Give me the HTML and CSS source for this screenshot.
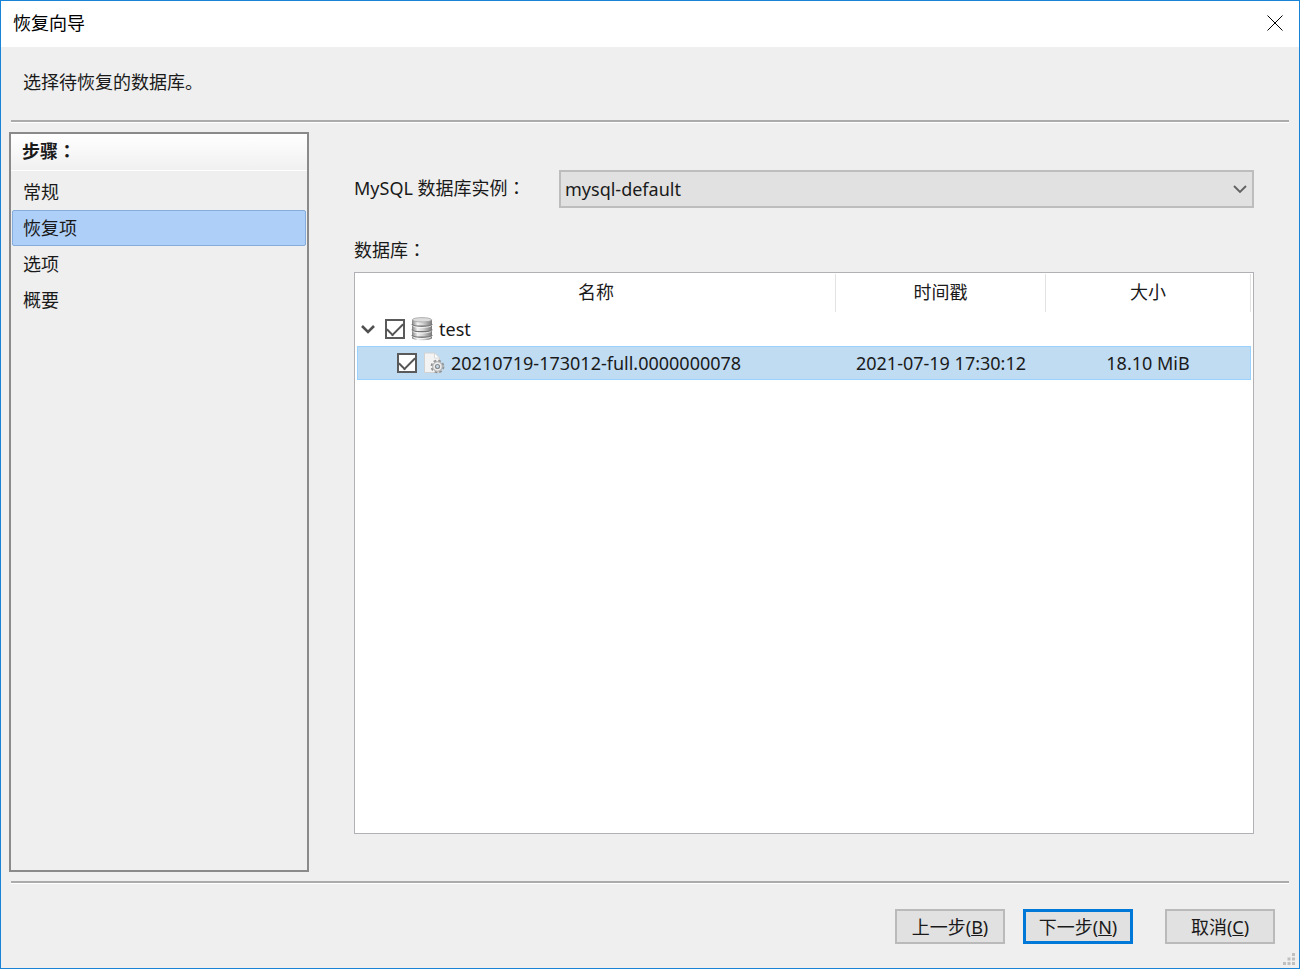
FILE: index.html
```
<!DOCTYPE html>
<html lang="zh-CN">
<head>
    <meta charset="UTF-8">
    <title>恢复向导</title>
    <link rel="stylesheet" href="styles.css">
</head>
<body>
    <div class="window">
        <div class="title-bar">
            <span>恢复向导</span>
            <button type="button" class="close" aria-label="关闭">
                <svg width="16" height="16" viewBox="0 0 16 16"><path d="M.5 .5l15 15M15.5 .5l-15 15" stroke="#000" stroke-width="1"/></svg>
            </button>
        </div>
        <div class="intro">选择待恢复的数据库。</div>
        <hr>
        <div class="main">
            <nav class="steps">
                <h2>步骤<span class="colon" lang="zh-TW">：</span></h2>
                <ul>
                    <li><a href="#">常规</a></li>
                    <li><a href="#" class="active">恢复项</a></li>
                    <li><a href="#">选项</a></li>
                    <li><a href="#">概要</a></li>
                </ul>
            </nav>
            <div class="content">
                <div class="instance-row">
                    <label for="instance">MySQL 数据库实例<span class="colon" lang="zh-TW">：</span></label>
                    <div class="select-box">
                        <select id="instance">
                            <option>mysql-default</option>
                        </select>
                        <svg class="arrow" width="14" height="9" viewBox="0 0 14 9"><path d="M1 1l6 6 6-6" fill="none" stroke="#606060" stroke-width="1.8"/></svg>
                    </div>
                </div>
                <div class="list-label">数据库<span class="colon" lang="zh-TW">：</span></div>
                <div class="list">
                    <table>
                        <colgroup>
                            <col>
                            <col class="col-time">
                            <col class="col-size">
                        </colgroup>
                        <thead>
                            <tr><th>名称</th><th>时间戳</th><th>大小</th></tr>
                        </thead>
                        <tbody>
                            <tr>
                                <td>
                                    <div class="item">
                                        <button type="button" class="toggle" aria-label="折叠">
                                            <svg width="14" height="9" viewBox="0 0 14 9"><path d="M1 1l6 6 6-6" fill="none" stroke="#505050" stroke-width="2.6"/></svg>
                                        </button>
                                        <input type="checkbox" id="db-test" checked>
                                        <svg class="icon" width="22" height="24" viewBox="0 0 22 24">
                                            <defs>
                                                <linearGradient id="metal" x1="0" x2="1" y1="0" y2="0">
                                                    <stop offset="0" stop-color="#828282"/>
                                                    <stop offset=".28" stop-color="#f2f2f2"/>
                                                    <stop offset=".55" stop-color="#d2d2d2"/>
                                                    <stop offset="1" stop-color="#777"/>
                                                </linearGradient>
                                            </defs>
                                            <path d="M1 3v18c0 3 20 3 20 0V3z" fill="url(#metal)"/>
                                            <path d="M1 7c0 3 20 3 20 0M1 12.5c0 3 20 3 20 0M1 18c0 3 20 3 20 0" fill="none" stroke="#757575" stroke-width="1.3"/>
                                            <path d="M1.5 8.5c1 2.600 18 2.600 19 0M1.5 14c1 2.600 18 2.600 19 0M1.5 19.5c1 2.600 18 2.600 19 0" fill="none" stroke="#fff" stroke-opacity=".75"/>
                                            <ellipse cx="11" cy="2.8" rx="9.7" ry="2.2" fill="#dcdcdc" stroke="#a2a2a2" stroke-width=".8"/>
                                        </svg>
                                        <label for="db-test">test</label>
                                    </div>
                                </td>
                                <td></td>
                                <td></td>
                            </tr>
                            <tr class="selected">
                                <td>
                                    <div class="item child">
                                        <input type="checkbox" id="backup" checked>
                                        <svg class="icon" width="22" height="22" viewBox="0 0 22 22">
                                            <path d="M1.5 1h10l5 5v14.500h-15z" fill="#f3f3f3" stroke="#d2d2d2"/>
                                            <path d="M11.5 1v5h5z" fill="#fff" stroke="#d0d0d0" stroke-width=".8"/>
                                            <circle cx="14.5" cy="14.5" r="6" fill="none" stroke="#949494" stroke-width="1.8" stroke-dasharray="2.7 2.012"/>
                                            <circle cx="14.5" cy="14.5" r="4.8" fill="#ececec" stroke="#a2a2a2"/>
                                            <circle cx="14.5" cy="14.5" r="2" fill="#c4dcef" stroke="#8c8c8c" stroke-width="1.2"/>
                                        </svg>
                                        <label for="backup">20210719-173012-full.0000000078</label>
                                    </div>
                                </td>
                                <td>2021-07-19 17:30:12</td>
                                <td>18.10 MiB</td>
                            </tr>
                        </tbody>
                    </table>
                </div>
            </div>
        </div>
        <hr>
        <div class="footer">
            <button type="button" class="btn">上一步(<u>B</u>)</button>
            <button type="button" class="btn primary">下一步(<u>N</u>)</button>
            <button type="button" class="btn cancel">取消(<u>C</u>)</button>
        </div>
        <svg class="grip" width="12" height="12" viewBox="0 0 12 12"><path d="M9 0h3v3h-3zM4.5 4.5h3v3h-3zM9 4.5h3v3h-3zM0 9h3v3h-3zM4.5 9h3v3h-3zM9 9h3v3h-3z" fill="#bfbfbf"/></svg>
    </div>
</body>
</html>
```
FILE: styles.css
```
* {
    box-sizing: border-box;
}

body {
    margin: 0;
    font-family: "Noto Sans", "Noto Sans CJK SC", sans-serif;
    font-size: 18px;
    line-height: 24px;
    color: #1a1a1a;
}

button, select {
    font: inherit;
    color: inherit;
}

.window {
    position: relative;
    display: flex;
    flex-direction: column;
    min-height: 100vh;
    background-color: #efefef;
    border: 1px solid #1883d7;
}

.title-bar {
    display: flex;
    align-items: center;
    justify-content: space-between;
    height: 46px;
    padding: 0 16px 2px 12px;
    background-color: #fff;
    color: #000;
}

.close {
    display: flex;
    padding: 0;
    border: none;
    background: none;
}

.intro {
    padding: 23px 22px 26px;
}

hr {
    width: calc(100% - 20px);
    height: 3px;
    margin: 0 auto;
    border: none;
    border-top: 2px solid #ababab;
    border-bottom: 1px solid #fff;
}

/* colon sits in the middle of its cell */
.colon {
    font-family: "Noto Sans CJK TC", sans-serif;
}

.main {
    flex: 1;
    display: flex;
    padding: 9px 45px 9px 8px;
}

.steps {
    width: 300px;
    flex-shrink: 0;
    border: 2px solid #8a8a8a;
}

.steps h2 {
    margin: 0;
    padding: 4px 11px 7px;
    font-size: 18px;
    font-weight: bold;
    background: linear-gradient(#fff, #f0f0f0);
    border-bottom: 1px solid #fff;
}

.steps ul {
    margin: 3px 1px;
    padding: 0;
    list-style: none;
}

.steps a {
    display: block;
    height: 36px;
    padding: 5px 10px;
    border: 1px solid transparent;
    border-radius: 2px;
    color: inherit;
    text-decoration: none;
}

.steps a.active {
    background-color: #aecff7;
    border-color: #84acdd;
}

.content {
    flex: 1;
    display: flex;
    flex-direction: column;
    padding: 38px 0 38px 45px;
}

.instance-row {
    display: flex;
    align-items: center;
    height: 38px;
}

.instance-row label {
    width: 205px;
    padding-bottom: 3px;
}

.select-box {
    position: relative;
    flex: 1;
}

.select-box select {
    display: block;
    width: 100%;
    height: 38px;
    padding: 0 4px;
    appearance: none;
    background-color: #e1e1e1;
    border: 2px solid #bdbdbd;
    border-radius: 0;
}

.arrow {
    position: absolute;
    right: 7px;
    top: 15px;
    pointer-events: none;
}

.list-label {
    padding: 29px 0 10px;
}

.list {
    flex: 1;
    padding: 1px 2px;
    background-color: #fff;
    border: 1px solid #b0b0b5;
}

table {
    width: 100%;
    table-layout: fixed;
    border-collapse: separate;
    border-spacing: 0;
}

.col-time {
    width: 210px;
}

.col-size {
    width: 205px;
}

th {
    height: 38px;
    padding: 0 0 2px;
    font-weight: normal;
    border-right: 1px solid #e2e2e2;
}

td {
    height: 34px;
    padding: 0;
    text-align: center;
}

.selected td {
    background-color: #c0dcf2;
    border: solid #99d1ff;
    border-width: 1px 0;
}

.selected td:first-child {
    border-left-width: 1px;
}

.selected td:last-child {
    border-right-width: 1px;
}

.item {
    display: flex;
    align-items: center;
    padding-left: 4px;
}

.item.child {
    padding-left: 39px;
}

.toggle {
    display: flex;
    margin-right: 10px;
    padding: 0;
    border: none;
    background: none;
}

input[type="checkbox"] {
    appearance: none;
    display: grid;
    place-items: center;
    width: 20px;
    height: 20px;
    margin: 0 6px 0 0;
    background-color: #fff;
    border: 2px solid #5a5a5a;
}

input[type="checkbox"]:checked::before {
    content: "";
    width: 14px;
    height: 7px;
    border-left: 2px solid #555;
    border-bottom: 2px solid #555;
    transform: translateY(-2px) rotate(-45deg);
}

.icon {
    margin-right: 6px;
}

.footer {
    display: flex;
    justify-content: flex-end;
    padding: 25px 24px 24px;
}

.btn {
    width: 110px;
    height: 35px;
    margin-left: 18px;
    padding: 0;
    background-color: #e1e1e1;
    border: 2px solid #bababa;
}

.btn.primary {
    border: 3px solid #0078d7;
}

.btn.cancel {
    margin-left: 32px;
}

.grip {
    position: absolute;
    right: 4px;
    bottom: 3px;
}
```
